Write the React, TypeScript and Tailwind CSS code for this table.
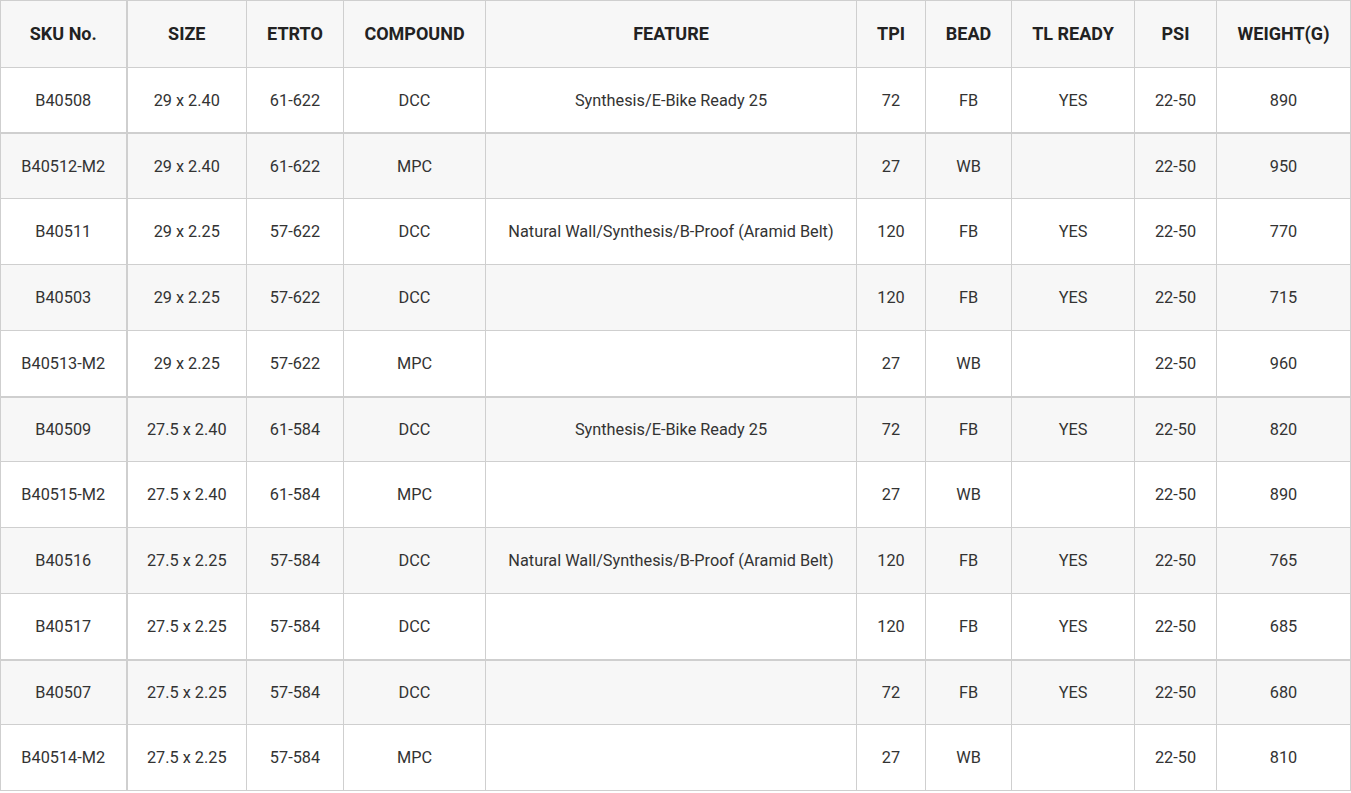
import React from "react";

const headers = ["SKU No.", "SIZE", "ETRTO", "COMPOUND", "FEATURE", "TPI", "BEAD", "TL READY", "PSI", "WEIGHT(G)"];
const widths = [126, 120, 97, 142, 371, 69, 86, 123, 82, 134];

const rows: string[][] = [
  ["B40508", "29 x 2.40", "61-622", "DCC", "Synthesis/E-Bike Ready 25", "72", "FB", "YES", "22-50", "890"],
  ["B40512-M2", "29 x 2.40", "61-622", "MPC", "", "27", "WB", "", "22-50", "950"],
  ["B40511", "29 x 2.25", "57-622", "DCC", "Natural Wall/Synthesis/B-Proof (Aramid Belt)", "120", "FB", "YES", "22-50", "770"],
  ["B40503", "29 x 2.25", "57-622", "DCC", "", "120", "FB", "YES", "22-50", "715"],
  ["B40513-M2", "29 x 2.25", "57-622", "MPC", "", "27", "WB", "", "22-50", "960"],
  ["B40509", "27.5 x 2.40", "61-584", "DCC", "Synthesis/E-Bike Ready 25", "72", "FB", "YES", "22-50", "820"],
  ["B40515-M2", "27.5 x 2.40", "61-584", "MPC", "", "27", "WB", "", "22-50", "890"],
  ["B40516", "27.5 x 2.25", "57-584", "DCC", "Natural Wall/Synthesis/B-Proof (Aramid Belt)", "120", "FB", "YES", "22-50", "765"],
  ["B40517", "27.5 x 2.25", "57-584", "DCC", "", "120", "FB", "YES", "22-50", "685"],
  ["B40507", "27.5 x 2.25", "57-584", "DCC", "", "72", "FB", "YES", "22-50", "680"],
  ["B40514-M2", "27.5 x 2.25", "57-584", "MPC", "", "27", "WB", "", "22-50", "810"],
];

const thickAfter = new Set([0, 4, 8]);
const heights = [65, 66, 66, 66, 66, 65, 66, 66, 66, 65, 66];

export default function App() {
  return (
    <div className="w-[1351px] bg-white" style={{ fontFamily: "Roboto, 'Liberation Sans', sans-serif" }}>
      <table className="w-[1351px] table-fixed border-collapse border border-[#cfcfcf] text-[16.3px] text-[#333]">
        <colgroup>
          {widths.map((w, i) => (
            <col key={i} style={{ width: w }} />
          ))}
        </colgroup>
        <thead>
          <tr className="h-[67px] bg-[#f7f7f7]">
            {headers.map((h, i) => (
              <th
                key={i}
                className={`border border-[#cfcfcf] p-0 pb-[2px] text-center align-middle text-[18px] font-bold text-[#222] ${
                  i === 0 ? "border-r-2" : ""
                }`}
              >
                {h}
              </th>
            ))}
          </tr>
        </thead>
        <tbody>
          {rows.map((r, ri) => (
            <tr
              key={ri}
              className={`${ri % 2 === 1 ? "bg-[#f7f7f7]" : "bg-white"} ${thickAfter.has(ri) ? "border-b-2 border-b-[#cfcfcf]" : ""}`}
              style={{ height: heights[ri] }}
            >
              {r.map((c, ci) => (
                <td
                  key={ci}
                  className={`border border-[#cfcfcf] p-0 pt-[2px] text-center align-middle ${ci === 0 ? "border-r-2" : ""} ${
                    thickAfter.has(ri) ? "border-b-2" : ""
                  }`}
                >
                  {c}
                </td>
              ))}
            </tr>
          ))}
        </tbody>
      </table>
    </div>
  );
}
